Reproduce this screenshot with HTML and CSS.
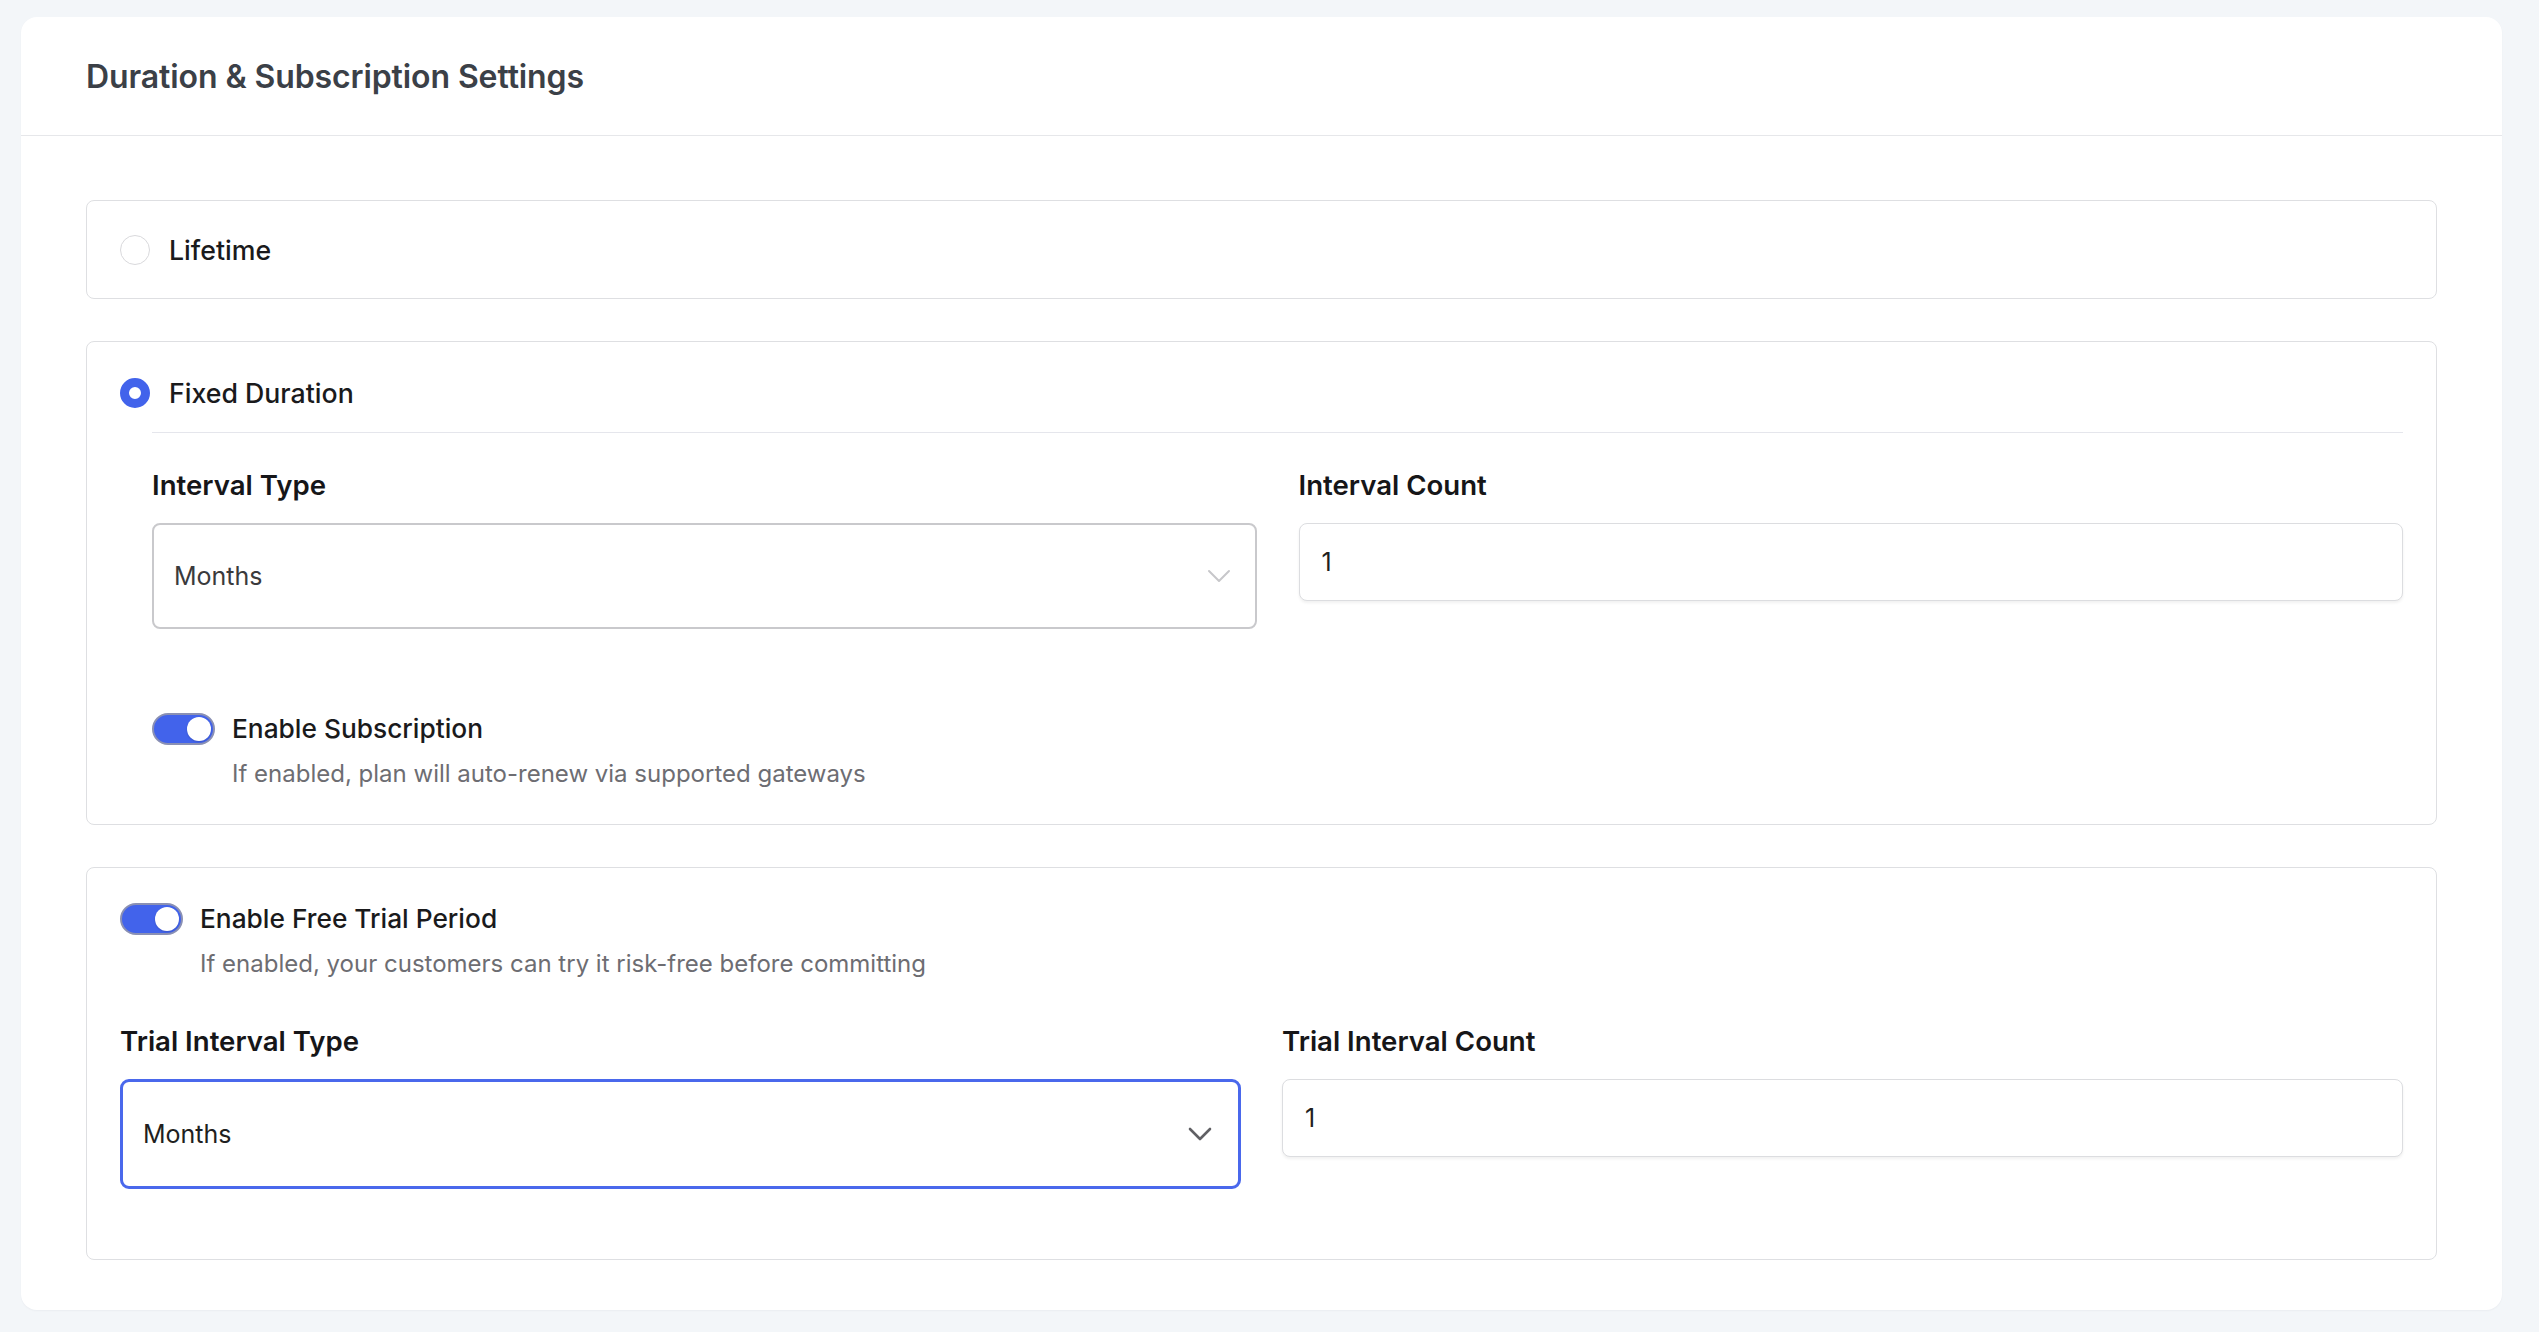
FILE: index.html
```html
<!DOCTYPE html>
<html lang="en">
<head>
<meta charset="utf-8">
<title>Duration &amp; Subscription Settings</title>
<link rel="stylesheet" href="styles.css">
</head>
<body>
<div class="card">
  <div class="card-header">
    <h2 class="title">Duration &amp; Subscription Settings</h2>
  </div>
  <div class="card-body">
    <div class="option-box lifetime">
      <div class="radio-row">
        <span class="radio"></span>
        <span class="radio-label">Lifetime</span>
      </div>
    </div>

    <div class="option-box fixed">
      <div class="radio-row">
        <span class="radio checked"></span>
        <span class="radio-label">Fixed Duration</span>
      </div>
      <div class="nested">
        <div class="field-grid">
          <div class="field">
            <label class="field-label">Interval Type</label>
            <div class="select">
              <span class="select-value">Months</span>
              <svg class="chevron light" width="24" height="14" viewBox="0 0 24 14"><polyline points="2,2 12,12 22,2" fill="none" stroke="currentColor" stroke-width="2" stroke-linecap="round" stroke-linejoin="round"/></svg>
            </div>
          </div>
          <div class="field">
            <label class="field-label">Interval Count</label>
            <div class="input"><span class="input-value">1</span></div>
          </div>
        </div>
        <div class="toggle-block sub">
          <div class="toggle-row">
            <span class="switch"><span class="knob"></span></span>
            <span class="toggle-label">Enable Subscription</span>
          </div>
          <p class="toggle-desc">If enabled, plan will auto-renew via supported gateways</p>
        </div>
      </div>
    </div>

    <div class="option-box trial">
      <div class="toggle-block">
        <div class="toggle-row">
          <span class="switch"><span class="knob"></span></span>
          <span class="toggle-label">Enable Free Trial Period</span>
        </div>
        <p class="toggle-desc">If enabled, your customers can try it risk-free before committing</p>
      </div>
      <div class="field-grid trial-grid">
        <div class="field">
          <label class="field-label">Trial Interval Type</label>
          <div class="select focused">
            <span class="select-value dark">Months</span>
            <svg class="chevron dark" width="24" height="14" viewBox="0 0 24 14"><polyline points="2,2 12,12 22,2" fill="none" stroke="currentColor" stroke-width="2.6" stroke-linecap="round" stroke-linejoin="round"/></svg>
          </div>
        </div>
        <div class="field">
          <label class="field-label">Trial Interval Count</label>
          <div class="input"><span class="input-value">1</span></div>
        </div>
      </div>
    </div>
  </div>
</div>
</body>
</html>
```

FILE: styles.css
```css
* { box-sizing: border-box; }

html, body {
  margin: 0;
  background: #f3f6f9;
}

body {
  padding: 17px 37px 25px 21px;
  font-family: Inter, "Noto Sans", "Liberation Sans", sans-serif;
  color: #1d1d1f;
}

.card {
  background: #ffffff;
  border-radius: 16px;
  box-shadow: 0 1px 2px rgba(20, 30, 50, 0.04);
}

.card-header {
  height: 119px;
  padding: 0 65px;
  display: flex;
  align-items: center;
  border-bottom: 1.5px solid #e6e7ea;
}

.title {
  margin: 0;
  font-size: 32px;
  font-weight: 600;
  color: #3b4047;
  letter-spacing: -0.1px;
}

.card-body {
  padding: 64px 65px 50px;
  display: flex;
  flex-direction: column;
  gap: 42px;
}

.option-box {
  border: 1.5px solid #dedfe2;
  border-radius: 8px;
  padding: 0 33px;
}

.lifetime {
  height: 99px;
  display: flex;
  align-items: center;
}

.radio-row {
  display: flex;
  align-items: center;
  gap: 19px;
}

.radio {
  width: 30px;
  height: 30px;
  border-radius: 50%;
  border: 1.5px solid #d9d9dc;
  background: #fff;
  flex: none;
}

.radio.checked {
  width: 30px;
  height: 30px;
  border: 9px solid #4263eb;
}

.radio-label {
  font-size: 26.7px;
  font-weight: 500;
  color: #1a1a1c;
  line-height: 34px;
}

.fixed .radio-row {
  padding-top: 34px;
  padding-bottom: 22px;
}

.nested {
  margin-left: 32px;
  border-top: 1.5px solid #e5e6ec;
  padding-top: 35px;
  padding-bottom: 34px;
}

.field-grid {
  display: grid;
  grid-template-columns: 1fr 1fr;
  column-gap: 42px;
  align-items: start;
}

.field {
  display: flex;
  flex-direction: column;
  gap: 21px;
}

.field-label {
  font-size: 27.6px;
  font-weight: 600;
  color: #161618;
  line-height: 34px;
}

.select {
  height: 106px;
  border: 2px solid #c9c9cc;
  border-radius: 8px;
  padding: 0 24px 0 20px;
  display: flex;
  align-items: center;
  justify-content: space-between;
  background: #fff;
}

.select.focused {
  height: 110px;
  border: 3px solid #4a68ec;
  border-radius: 9px;
  padding: 0 26px 0 20px;
}

.select-value {
  font-size: 25px;
  color: #3a3a3c;
}

.select-value.dark {
  color: #1f1f21;
}

.chevron.light { color: #c7c7ca; }
.chevron.dark { color: #606064; }

.input {
  height: 78px;
  border: 1.5px solid #dcdde0;
  border-radius: 8px;
  padding: 0 22px;
  display: flex;
  align-items: center;
  background: #fff;
  box-shadow: 0 2px 3px rgba(0, 0, 0, 0.06);
}

.input-value {
  font-size: 25px;
  color: #1f1f21;
}

.toggle-block.sub {
  margin-top: 83px;
}

.trial .toggle-block {
  padding-top: 34px;
}

.toggle-row {
  display: flex;
  align-items: center;
  gap: 17px;
}

.switch {
  position: relative;
  width: 63px;
  height: 32px;
  border-radius: 16px;
  background: #4263eb;
  border: 2px solid #8a90b4;
  flex: none;
}

.knob {
  position: absolute;
  top: 2px;
  right: 2px;
  width: 24px;
  height: 24px;
  border-radius: 50%;
  background: #fff;
  box-shadow: 0 1px 2px rgba(0, 0, 0, 0.15);
}

.toggle-label {
  font-size: 26.3px;
  font-weight: 500;
  color: #1a1a1c;
  line-height: 34px;
}

.toggle-desc {
  margin: 12px 0 0 80px;
  font-size: 24px;
  line-height: 32px;
  color: #6d6d72;
}

.trial-grid {
  margin-top: 44px;
  padding-bottom: 70px;
  column-gap: 41px;
}
```
